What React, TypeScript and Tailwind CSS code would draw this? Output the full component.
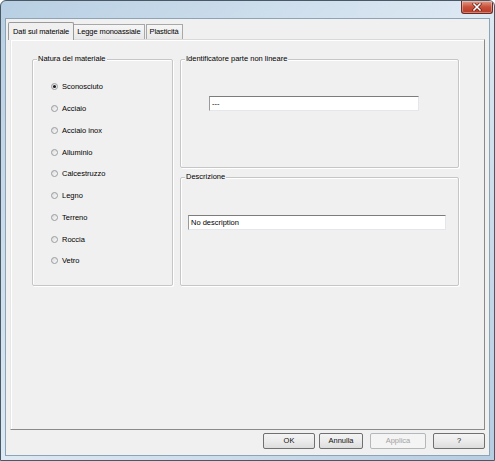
import React from "react";

const materials = [
  "Sconosciuto",
  "Acciaio",
  "Acciaio inox",
  "Alluminio",
  "Calcestruzzo",
  "Legno",
  "Terreno",
  "Roccia",
  "Vetro",
];

const Radio = ({ label, checked }: { label: string; checked?: boolean }) => (
  <div className="flex items-center h-[21.75px] pl-[18px]">
    <span className="w-[7px] h-[7px] rounded-full border border-[#9a9c9f] bg-gradient-to-br from-[#dadada] to-[#fbfbfb] flex items-center justify-center">
      {checked && <span className="w-[3px] h-[3px] rounded-full bg-[#1c1c1c]" />}
    </span>
    <span className="ml-[4px]">{label}</span>
  </div>
);

const GroupBox = ({
  title,
  className,
  children,
}: {
  title: string;
  className?: string;
  children?: React.ReactNode;
}) => (
  <div
    className={`relative border border-[#c6c6c6] rounded-[2px] shadow-[inset_1px_1px_0_#ffffff,1px_1px_0_#ffffff] ${className ?? ""}`}
  >
    <span className="absolute -top-[6px] left-[4px] px-[1px] bg-[#f0f0f0] leading-[10px]">{title}</span>
    {children}
  </div>
);

const TextBox = ({ value, className }: { value: string; className?: string }) => (
  <div
    className={`h-[15px] bg-white border border-t-[#7c7c7c] border-l-[#9a9a9a] border-r-[#e3e6ea] border-b-[#e3e6ea] flex items-center pl-[2px] ${className ?? ""}`}
  >
    {value}
  </div>
);

const Button = ({
  label,
  width,
  disabled,
}: {
  label: string;
  width: string;
  disabled?: boolean;
}) => (
  <div
    className={`${width} h-[16px] rounded-[2px] border flex items-center justify-center ${
      disabled
        ? "border-[#b5b8bb] bg-[#f4f4f4] text-[#a3a3a3]"
        : "border-[#707070] bg-gradient-to-b from-[#f4f4f4] via-[#ebebeb] to-[#dddddd] text-[#111]"
    }`}
  >
    {label}
  </div>
);

export default function App() {
  return (
    <div className="w-[495px] h-[461px] flex flex-col border border-[#4a5866] rounded-t-[6px] overflow-hidden bg-gradient-to-br from-[#b8cfe3] via-[#dde9f3] to-[#b6cde2] font-['Liberation_Sans',Arial,sans-serif] text-[7.5px] text-[#000]">
      {/* title bar */}
      <div className="h-[17px] flex justify-end items-start pr-[1px]">
        <div className="w-[32px] h-[13px] rounded-b-[3px] border border-t-0 border-[#6b2a22] bg-gradient-to-b from-[#e09a88] via-[#c8503a] to-[#b83a28] flex items-center justify-center shadow-[inset_0_0_0_1px_rgba(255,255,255,0.35)]">
          <svg width="10" height="8" viewBox="0 0 10 8">
            <path d="M2 1 L8 7 M8 1 L2 7" stroke="#5a1c14" strokeWidth="3" strokeLinecap="square" />
            <path d="M2 1 L8 7 M8 1 L2 7" stroke="#ffffff" strokeWidth="1.6" strokeLinecap="square" />
          </svg>
        </div>
      </div>

      {/* client area */}
      <div className="flex-1 flex px-[4px] pb-[4px]">
        <div className="flex-1 flex flex-col bg-[#f0f0f0] border border-[#8da3b6]">
          {/* tabs */}
          <div className="flex items-end mt-[3px] ml-[2px] h-[17px] relative z-10 tracking-[-0.1px]">
            <div className="h-[18px] px-[4px] pt-[1px] flex items-center border border-b-0 border-[#9a9a9a] rounded-t-[2px] bg-[#f0f0f0] -mb-[1px]">
              Dati sul materiale
            </div>
            <div className="h-[15px] px-[3px] flex items-center border-t border-r border-[#a8a8a8] bg-gradient-to-b from-[#f6f6f6] to-[#e8e8e8]">
              Legge monoassiale
            </div>
            <div className="h-[15px] px-[3px] flex items-center border-t border-r border-l border-[#a8a8a8] ml-[1px] bg-gradient-to-b from-[#f6f6f6] to-[#e8e8e8]">
              Plasticità
            </div>
          </div>

          {/* panel */}
          <div className="mx-[4px] h-[391px] border border-t-[#d9d9d9] border-l-[#e6e6e6] border-r-[#8a8a8a] border-b-[#8a8a8a] shadow-[inset_1px_1px_0_#ffffff] flex gap-[7px] pl-[21px] pt-[19px]">
            <GroupBox title="Natura del materiale" className="w-[141px] h-[227px] pt-[16px]">
              {materials.map((m, i) => (
                <Radio key={m} label={m} checked={i === 0} />
              ))}
            </GroupBox>
            <div className="flex flex-col gap-[9px]">
              <GroupBox title="Identificatore parte non lineare" className="w-[279px] h-[109px] pt-[36px] pl-[28px]">
                <TextBox value="---" className="w-[210px]" />
              </GroupBox>
              <GroupBox title="Descrizione" className="w-[279px] h-[109px] pt-[37px] pl-[7px]">
                <TextBox value="No description" className="w-[258px]" />
              </GroupBox>
            </div>
          </div>

          {/* buttons */}
          <div className="flex justify-end items-start mt-[3px] pr-[4px]">
            <Button label="OK" width="w-[52px]" />
            <div className="w-[4px]" />
            <Button label="Annulla" width="w-[44px]" />
            <div className="w-[7px]" />
            <Button label="Applica" width="w-[56px]" disabled />
            <div className="w-[7px]" />
            <Button label="?" width="w-[52px]" />
          </div>
        </div>
      </div>
    </div>
  );
}
